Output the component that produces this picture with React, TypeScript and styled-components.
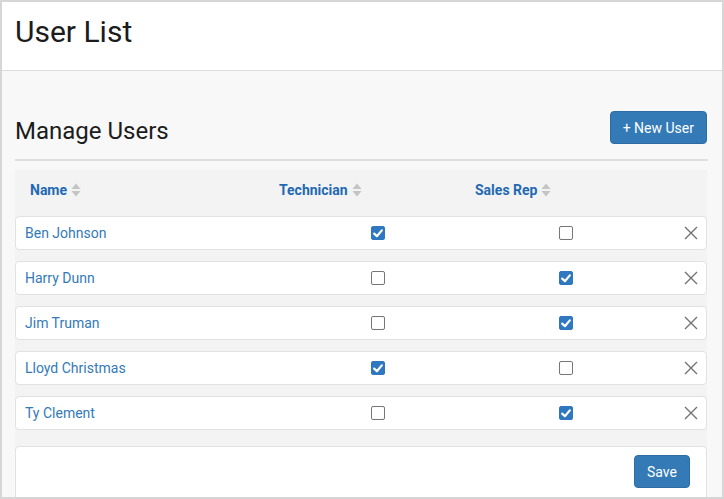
import React, { useState } from "react";
import styled, { createGlobalStyle } from "styled-components";

const GlobalStyle = createGlobalStyle`
  html, body {
    margin: 0;
    padding: 0;
    background: #ffffff;
    font-family: Roboto, "Liberation Sans", Arial, sans-serif;
  }
  * { box-sizing: border-box; }
`;

const Frame = styled.div`
  width: 724px;
  height: 499px;
  border: 2px solid #d6d6d6;
  overflow: hidden;
  background: #f8f8f8;
  display: flex;
  flex-direction: column;
`;

const PageHeader = styled.header`
  background: #ffffff;
  padding: 12px 13px 21px;
  border-bottom: 1px solid #dcdcdc;
`;

const PageTitle = styled.h1`
  margin: 0;
  font-size: 30px;
  line-height: 35px;
  font-weight: 400;
  color: #1c1c1c;
`;

const Content = styled.main`
  padding: 40px 15px 0 13px;
  flex: 1;
`;

const TitleRow = styled.div`
  display: flex;
  align-items: center;
  justify-content: space-between;
  height: 33px;
`;

const SectionTitle = styled.h2`
  margin: 6px 0 0;
  font-size: 24px;
  line-height: 28px;
  font-weight: 400;
  color: #1c1c1c;
`;

const Button = styled.button`
  height: 33px;
  padding: 0 12px;
  border: 1px solid #2e6da4;
  border-radius: 4px;
  background: #337ab7;
  color: #ffffff;
  font-family: inherit;
  font-size: 14px;
  cursor: pointer;
`;

const Rule = styled.hr`
  margin: 15px -1px 0 0;
  border: 0;
  height: 2px;
  background: #e0e0e0;
`;

const Table = styled.section`
  margin-top: 9px;
  background: #f3f3f3;
`;

const cols = "264px 196px 180px 1fr";

const HeadRow = styled.div`
  display: grid;
  grid-template-columns: ${cols};
  height: 46px;
  padding-top: 10px;
`;

const HeadCell = styled.div<{ $first?: boolean }>`
  display: flex;
  align-items: flex-start;
  gap: 4px;
  padding-left: ${(p) => (p.$first ? "15px" : "0")};
  font-size: 14px;
  line-height: 20px;
  font-weight: 700;
  color: #1f69b3;
`;

const SortIcon = () => (
  <svg width="10" height="14" viewBox="0 0 10 14" style={{ marginTop: 3 }}>
    <path d="M5 0.5 L9.5 6 H0.5 Z" fill="#c4c4c4" />
    <path d="M5 13.5 L9.5 8 H0.5 Z" fill="#c4c4c4" />
  </svg>
);

const Rows = styled.div`
  display: flex;
  flex-direction: column;
  gap: 11px;
`;

const UserRow = styled.div`
  display: grid;
  grid-template-columns: ${cols};
  align-items: center;
  height: 34px;
  background: #ffffff;
  border: 1px solid #e2e2e2;
  border-radius: 4px;
`;

const NameLink = styled.a`
  padding-left: 9px;
  font-size: 14px;
  color: #337ab7;
  text-decoration: none;
`;

const Center = styled.div`
  display: flex;
  justify-content: center;
`;

const Box = styled.span<{ $checked: boolean }>`
  width: 14px;
  height: 14px;
  border-radius: 2px;
  display: inline-flex;
  align-items: center;
  justify-content: center;
  cursor: pointer;
  background: ${(p) => (p.$checked ? "#2f78bf" : "#ffffff")};
  border: 1px solid ${(p) => (p.$checked ? "#2f78bf" : "#767676")};
`;

const RemoveCell = styled.div`
  display: flex;
  justify-content: flex-end;
  padding-right: 8px;
`;

const RemoveButton = styled.button`
  border: 0;
  background: none;
  padding: 0;
  display: flex;
  cursor: pointer;
`;

const Footer = styled.div`
  margin-top: 16px;
  height: 70px;
  background: #ffffff;
  border: 1px solid #e2e2e2;
  border-radius: 4px;
  display: flex;
  justify-content: flex-end;
  align-items: flex-start;
  padding: 8px 16px 0 0;
`;

type User = { name: string; tech: boolean; sales: boolean };

const initial: User[] = [
  { name: "Ben Johnson", tech: true, sales: false },
  { name: "Harry Dunn", tech: false, sales: true },
  { name: "Jim Truman", tech: false, sales: true },
  { name: "Lloyd Christmas", tech: true, sales: false },
  { name: "Ty Clement", tech: false, sales: true },
];

const Checkbox = ({ checked, onToggle }: { checked: boolean; onToggle: () => void }) => (
  <Box $checked={checked} role="checkbox" aria-checked={checked} onClick={onToggle}>
    {checked && (
      <svg width="10" height="9" viewBox="0 0 10 9">
        <path d="M1.2 4.6 L3.9 7.2 L8.8 1.4" fill="none" stroke="#fff" strokeWidth="2.2" strokeLinecap="round" strokeLinejoin="round" />
      </svg>
    )}
  </Box>
);

const CloseIcon = () => (
  <svg width="14" height="14" viewBox="0 0 14 14">
    <path d="M1 1 L13 13 M13 1 L1 13" stroke="#727272" strokeWidth="1.4" />
  </svg>
);

const App = () => {
  const [users, setUsers] = useState<User[]>(initial);

  const toggle = (i: number, key: "tech" | "sales") =>
    setUsers((list) => list.map((u, j) => (j === i ? { ...u, [key]: !u[key] } : u)));

  const remove = (i: number) => setUsers((list) => list.filter((_, j) => j !== i));

  return (
    <>
      <GlobalStyle />
      <Frame>
        <PageHeader>
          <PageTitle>User List</PageTitle>
        </PageHeader>
        <Content>
          <TitleRow>
            <SectionTitle>Manage Users</SectionTitle>
            <Button>+ New User</Button>
          </TitleRow>
          <Rule />
          <Table>
            <HeadRow>
              <HeadCell $first>
                Name <SortIcon />
              </HeadCell>
              <HeadCell>
                Technician <SortIcon />
              </HeadCell>
              <HeadCell>
                Sales Rep <SortIcon />
              </HeadCell>
              <HeadCell />
            </HeadRow>
            <Rows>
              {users.map((u, i) => (
                <UserRow key={u.name}>
                  <NameLink href="#">{u.name}</NameLink>
                  <Center>
                    <Checkbox checked={u.tech} onToggle={() => toggle(i, "tech")} />
                  </Center>
                  <Center>
                    <Checkbox checked={u.sales} onToggle={() => toggle(i, "sales")} />
                  </Center>
                  <RemoveCell>
                    <RemoveButton onClick={() => remove(i)} aria-label="Remove">
                      <CloseIcon />
                    </RemoveButton>
                  </RemoveCell>
                </UserRow>
              ))}
            </Rows>
            <Footer>
              <Button>Save</Button>
            </Footer>
          </Table>
        </Content>
      </Frame>
    </>
  );
};

export default App;
